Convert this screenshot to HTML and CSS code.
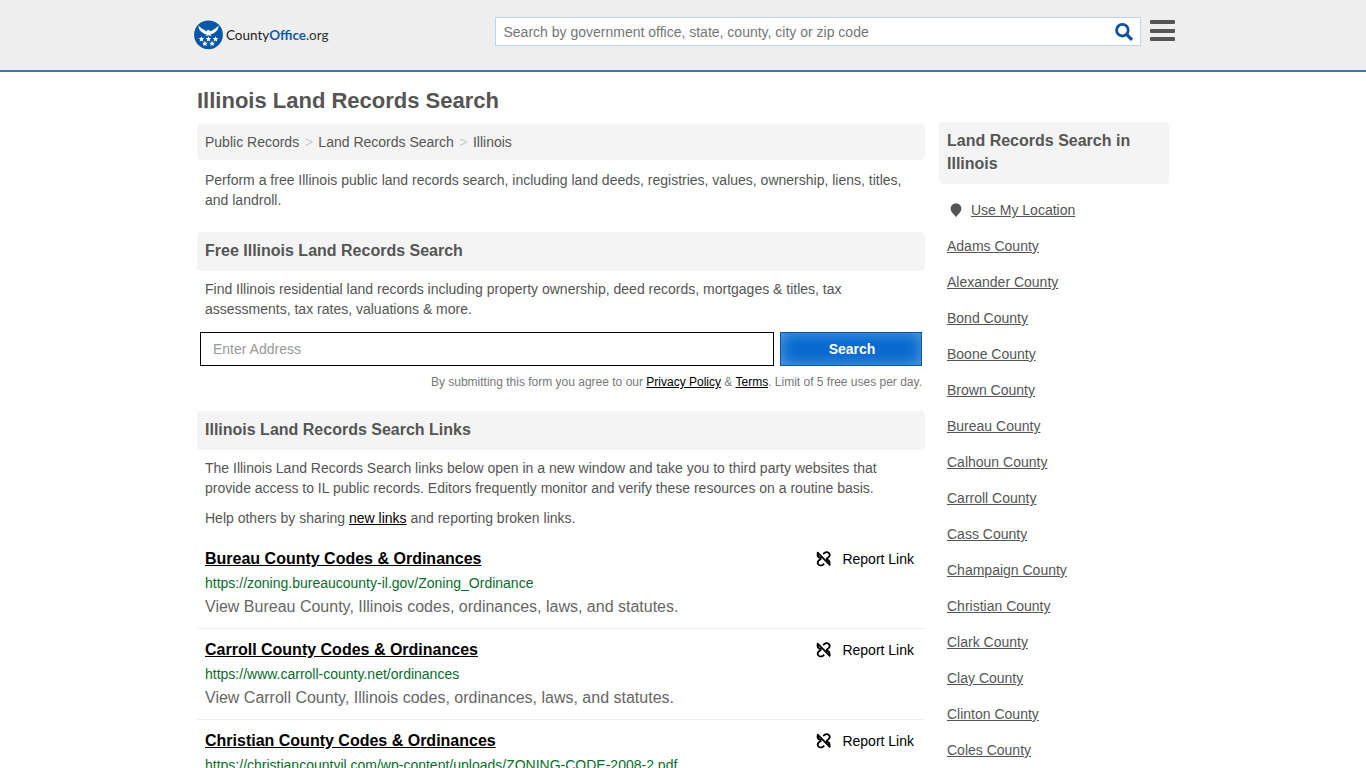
FILE: index.html
```html
<!DOCTYPE html>
<html lang="en">
<head>
  <meta charset="UTF-8">
  <meta name="viewport" content="width=device-width, initial-scale=1.0">
  <title>Illinois Land Records Search</title>
  <link rel="stylesheet" href="styles.css">
</head>
<body>

  <!-- Icons -->
  <svg class="icon-defs" width="0" height="0">
    <symbol id="broken-link" viewBox="0 0 16 16">
      <path d="M2.2 1.2 L15.2 14.4 M8.2 3 L9.4 1.9 C11 0.8 13.2 1 14.2 2.4 C15.2 4 14.6 5.4 13.4 6.4 L11.2 8 M9.2 12.6 L8 13.7 C6.4 14.8 4.2 14.6 3.2 13.2 C2.2 11.6 2.8 10.2 4 9.2 L6.4 7.6 M2.6 2.6 C2.2 5.2 3.4 6.6 6.2 7.4 M11 8.2 C13.6 9 15 10.4 14.6 13" fill="none" stroke="#000" stroke-width="1.8"/>
    </symbol>
  </svg>

  <header class="header">
    <div class="header-inner">
      <a class="logo" href="#">
        <svg width="136" height="30" viewBox="0 0 136 30">
          <circle cx="14.5" cy="14.8" r="14.4" fill="#0757a8"/>
          <path d="M4.4 5.5 C6.6 8.6 9.6 8.8 12.2 11.4 L13.2 10.2 L15.2 10 L16.6 11.6 C19.4 8.8 22.4 8.6 24.6 5.5 C24.6 8.8 23 11.2 20.6 12.4 C19.6 13.6 18 14 16.4 14 L17.6 16 L14.5 15.2 L11.4 16 L12.6 14 C11 14 9.4 13.6 8.4 12.4 C6 11.2 4.4 8.8 4.4 5.5Z" fill="#fff"/>
          <g fill="#fff">
            <path id="star" d="M7.5 16.2 L8.3 18.1 L10.3 18.2 L8.8 19.5 L9.3 21.5 L7.5 20.4 L5.7 21.5 L6.2 19.5 L4.7 18.2 L6.7 18.1Z"/>
            <use href="#star" x="7"/>
            <use href="#star" x="14"/>
            <use href="#star" x="3.4" y="4.6"/>
            <use href="#star" x="10.6" y="4.6"/>
          </g>
          <text class="logo-text" x="32" y="20.3" textLength="102.5" lengthAdjust="spacingAndGlyphs">County<tspan class="logo-blue">Office</tspan><tspan class="logo-org">.org</tspan></text>
        </svg>
      </a>
      <div class="site-search">
        <input type="text" placeholder="Search by government office, state, county, city or zip code">
        <svg width="20" height="20" viewBox="0 0 20 20">
          <circle cx="8.4" cy="8.2" r="5.8" fill="none" stroke="#0d509b" stroke-width="2.8"/>
          <path d="M12.6 12.4 L18 17.8" stroke="#0d509b" stroke-width="3.2"/>
        </svg>
      </div>
      <div class="menu-btn"><span></span><span></span><span></span></div>
    </div>
  </header>

  <div class="container">
    <main class="content">
      <h1>Illinois Land Records Search</h1>
      <div class="breadcrumb">
        <span>Public Records</span><span class="sep">&gt;</span><span>Land Records Search</span><span class="sep">&gt;</span><span>Illinois</span>
      </div>
      <p class="intro">Perform a free Illinois public land records search, including land deeds, registries, values, ownership, liens, titles,<br>and landroll.</p>

      <h2>Free Illinois Land Records Search</h2>
      <p>Find Illinois residential land records including property ownership, deed records, mortgages &amp; titles, tax<br>assessments, tax rates, valuations &amp; more.</p>
      <form class="address-form">
        <input type="text" placeholder="Enter Address">
        <button type="button">Search</button>
      </form>
      <div class="terms">By submitting this form you agree to our <a href="#">Privacy Policy</a> &amp; <a href="#">Terms</a>. Limit of 5 free uses per day.</div>

      <h2>Illinois Land Records Search Links</h2>
      <p>The Illinois Land Records Search links below open in a new window and take you to third party websites that<br>provide access to IL public records. Editors frequently monitor and verify these resources on a routine basis.</p>
      <p>Help others by sharing <a href="#">new links</a> and reporting broken links.</p>

      <div class="results">
        <div class="result">
          <div class="result-top">
            <a class="result-title" href="#">Bureau County Codes &amp; Ordinances</a>
            <span class="report"><svg width="16" height="16"><use href="#broken-link"/></svg>Report Link</span>
          </div>
          <div class="result-url">https://zoning.bureaucounty-il.gov/Zoning_Ordinance</div>
          <div class="result-desc">View Bureau County, Illinois codes, ordinances, laws, and statutes.</div>
        </div>
        <div class="result">
          <div class="result-top">
            <a class="result-title" href="#">Carroll County Codes &amp; Ordinances</a>
            <span class="report"><svg width="16" height="16"><use href="#broken-link"/></svg>Report Link</span>
          </div>
          <div class="result-url">https://www.carroll-county.net/ordinances</div>
          <div class="result-desc">View Carroll County, Illinois codes, ordinances, laws, and statutes.</div>
        </div>
        <div class="result">
          <div class="result-top">
            <a class="result-title" href="#">Christian County Codes &amp; Ordinances</a>
            <span class="report"><svg width="16" height="16"><use href="#broken-link"/></svg>Report Link</span>
          </div>
          <div class="result-url">https://christiancountyil.com/wp-content/uploads/ZONING-CODE-2008-2.pdf</div>
        </div>
      </div>
    </main>

    <aside class="sidebar">
      <h2>Land Records Search in Illinois</h2>
      <ul>
        <li class="location">
          <svg width="12" height="15" viewBox="0 0 12 15"><path d="M6 0.2 A5.4 5.3 0 0 1 11.4 5.5 C11.4 9 8 11 6 14.3 C4 11 0.6 9 0.6 5.5 A5.4 5.3 0 0 1 6 0.2Z" fill="#555"/></svg>
          <a href="#">Use My Location</a>
        </li>
        <li><a href="#">Adams County</a></li>
        <li><a href="#">Alexander County</a></li>
        <li><a href="#">Bond County</a></li>
        <li><a href="#">Boone County</a></li>
        <li><a href="#">Brown County</a></li>
        <li><a href="#">Bureau County</a></li>
        <li><a href="#">Calhoun County</a></li>
        <li><a href="#">Carroll County</a></li>
        <li><a href="#">Cass County</a></li>
        <li><a href="#">Champaign County</a></li>
        <li><a href="#">Christian County</a></li>
        <li><a href="#">Clark County</a></li>
        <li><a href="#">Clay County</a></li>
        <li><a href="#">Clinton County</a></li>
        <li><a href="#">Coles County</a></li>
      </ul>
    </aside>
  </div>

</body>
</html>
```

FILE: styles.css
```css
* {
  box-sizing: border-box;
}

body {
  font-family: 'Liberation Sans', Arial, sans-serif;
  font-size: 14px;
  line-height: 20px;
  margin: 0;
  height: 100vh;
  overflow: hidden;
  background: #fff;
  color: #555;
}

input, button {
  font-family: inherit;
}

.icon-defs {
  display: block;
}

/* Header */
.header {
  height: 72px;
  background: #eee;
  border-bottom: 2px solid #337ab7;
}

.header-inner {
  width: 981px;
  margin-left: 194px;
  display: flex;
  align-items: flex-start;
}

.logo {
  width: 301px;
  padding-top: 20px;
}

.logo svg {
  display: block;
}

.logo-text {
  font-family: Lato, sans-serif;
  font-size: 14px;
  fill: #222;
}

.logo-blue {
  font-weight: bold;
  fill: #0d5cab;
}

.logo-org {
  font-weight: 400;
  fill: #333;
}

.site-search {
  width: 646px;
  height: 29px;
  margin-top: 17px;
  padding-right: 6px;
  display: flex;
  align-items: center;
  background: #fff;
  border: 1px solid #bcd5e8;
}

.site-search input {
  flex: 1;
  border: 0;
  outline: 0;
  padding: 0 0 0 7.5px;
  font-size: 14px;
}

.site-search input::placeholder {
  color: #757575;
}

.menu-btn {
  width: 25px;
  height: 21px;
  margin: 20px 0 0 9px;
  display: flex;
  flex-direction: column;
  justify-content: space-between;
}

.menu-btn span {
  height: 4px;
  background: #555;
  border-radius: 1px;
}

/* Page columns */
.container {
  width: 972px;
  margin-left: 197px;
  display: flex;
  gap: 14px;
}

.content {
  width: 728px;
}

h1 {
  margin: 15px 0 9px;
  font-size: 22px;
  line-height: 28px;
}

h2 {
  margin: 0;
  padding: 7px 8px 9px;
  font-size: 16px;
  line-height: 23px;
  background: #f4f4f4;
  border-radius: 4px;
}

.content h2 {
  margin-top: 22px;
}

.breadcrumb {
  height: 36px;
  padding: 8px;
  background: #f4f4f4;
  border-radius: 4px;
}

.sep {
  color: #ccc;
  margin: 0 5.5px;
}

p {
  margin: 8px 8px 10px;
}

.intro {
  margin: 10px 8px 0;
}

.content a {
  color: #000;
}

/* Address form */
.address-form {
  display: flex;
  gap: 6px;
  margin: 13px 3px 6px;
}

.address-form input {
  width: 574px;
  height: 34px;
  padding: 0 12px;
  border: 1px solid #000;
  font-size: 14px;
}

.address-form input::placeholder {
  color: #999;
}

.address-form button {
  width: 142px;
  height: 34px;
  padding: 0 0 0 2px;
  border: 1px solid #0d56a6;
  background: #0768cd;
  box-shadow: inset 0 0 15px 0 #5ba3e6;
  color: #fff;
  font-size: 14px;
  font-weight: bold;
}

.terms {
  margin-right: 3px;
  font-size: 12px;
  text-align: right;
  color: #777;
}

.terms + h2 {
  margin-top: 19px;
}

/* Result list */
.result {
  height: 91px;
  padding: 9px 8px 0;
  border-bottom: 1px solid #eee;
}

.result-top {
  display: flex;
  justify-content: space-between;
  height: 23px;
  line-height: 23px;
}

.result-title {
  font-size: 16px;
  font-weight: bold;
}

.report {
  display: flex;
  align-items: center;
  gap: 11px;
  margin-right: 3px;
  padding-top: 1px;
  line-height: 24px;
  color: #000;
}

.result-url {
  margin-top: 3px;
  color: #0a6b2d;
}

.result-desc {
  margin-top: 2px;
  font-size: 16px;
  line-height: 23px;
  color: #666;
}

/* Sidebar */
.sidebar {
  width: 230px;
  padding-top: 50px;
}

.sidebar ul {
  list-style: none;
  margin: 8px 0 0;
  padding: 0 8px;
}

.sidebar li {
  padding: 8px 0;
}

.sidebar a {
  color: #555;
}

.sidebar .location {
  display: flex;
  align-items: center;
  gap: 9px;
  padding-left: 3px;
}
```
